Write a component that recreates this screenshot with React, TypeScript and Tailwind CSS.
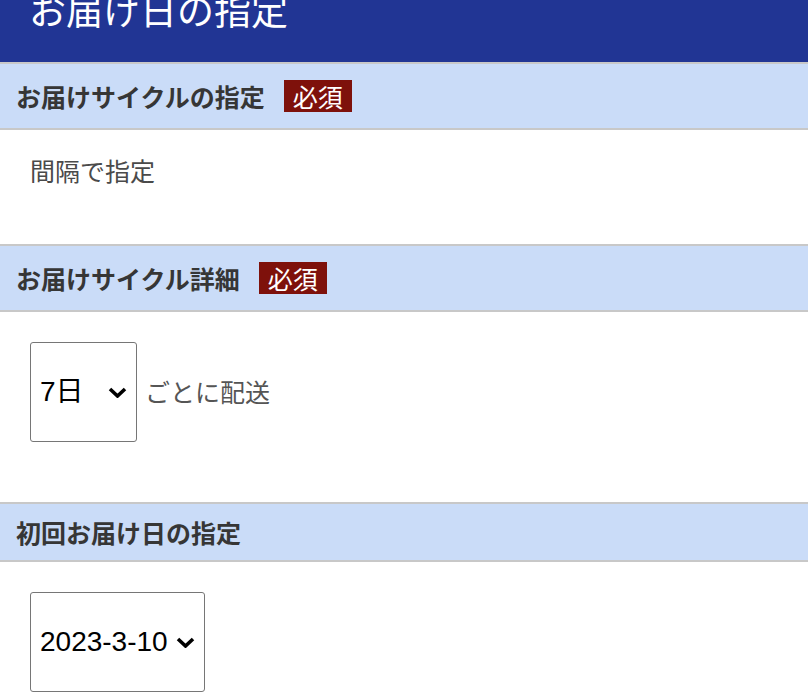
const jp = "font-['Noto_Sans_CJK_JP',sans-serif]"

const Badge = () => (
    <span className="ml-[19px] inline-block bg-[#7e110b] px-[9px] text-[25px] leading-8 font-normal text-white">
        必須
    </span>
)

const SectionHeader = ({ title, required }: { title: string; required?: boolean }) => (
    <div className="flex items-center border-y-2 border-[#c8c8c8] bg-[#cadcf8] px-4 py-4">
        <span className="text-[25px] leading-6 font-bold text-[#363636]">{title}</span>
        {required && <Badge />}
    </div>
)

const Chevron = () => (
    <svg width="19" height="11" viewBox="0 0 19 11" className="shrink-0">
        <path d="M2 2 L9.5 9 L17 2" fill="none" stroke="#000" strokeWidth="3.6" />
    </svg>
)

const FakeSelect = ({ value, width }: { value: string; width: string }) => (
    <div
        className={`flex h-[100px] items-center justify-between rounded-[3px] border border-[#767676] bg-white pr-[9px] pl-[9px] ${width}`}
    >
        <span className="font-['Liberation_Sans','Noto_Sans_CJK_JP',sans-serif] text-[28px] text-black">{value}</span>
        <Chevron />
    </div>
)

export default function App() {
    return (
        <div className={`min-h-[700px] w-full bg-white ${jp}`}>
            {/* Page title bar */}
            <div className="h-[62px] overflow-hidden bg-[#213594] pl-[29px]">
                <h1 className="mt-[-11px] text-[37px] leading-[40px] font-normal text-white">お届け日の指定</h1>
            </div>

            <SectionHeader title="お届けサイクルの指定" required />
            <div className="px-[30px] pt-[28px] pb-[62px]">
                <p className="text-[25px] leading-6 text-[#4a4a4a]">間隔で指定</p>
            </div>

            <SectionHeader title="お届けサイクル詳細" required />
            <div className="flex items-center gap-2 px-[30px] pt-[30px] pb-[60px]">
                <FakeSelect value="7日" width="w-[107px]" />
                <span className="text-[25px] text-[#555]">ごとに配送</span>
            </div>

            <SectionHeader title="初回お届け日の指定" />
            <div className="px-[30px] pt-[30px] pb-[60px]">
                <FakeSelect value="2023-3-10" width="w-[175px]" />
            </div>
        </div>
    )
}
